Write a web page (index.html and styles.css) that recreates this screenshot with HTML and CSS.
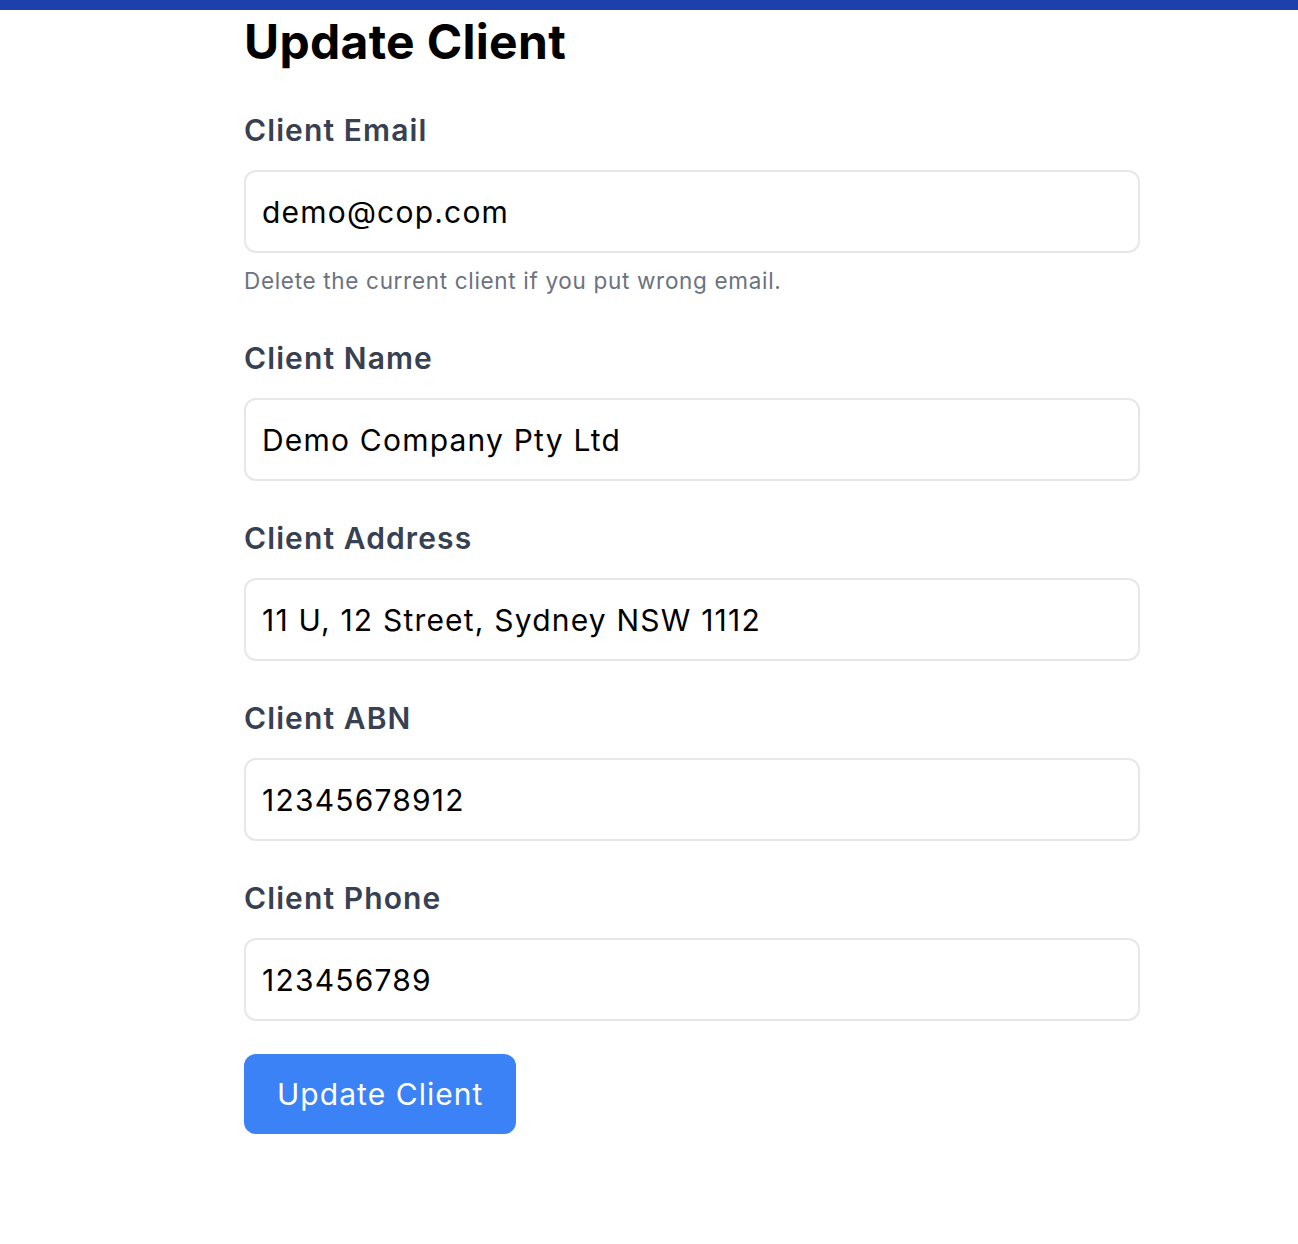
FILE: index.html
```html
<!DOCTYPE html>
<html lang="en">
<head>
  <meta charset="UTF-8" />
  <meta name="viewport" content="width=device-width, initial-scale=1" />
  <title>Update Client</title>
  <link rel="stylesheet" href="styles.css">
</head>
<body>
  <div class="topbar"></div>
  <main class="container">
    <h1>Update Client</h1>
    <form id="clientForm">
      <div class="field">
        <label for="email">Client Email</label>
        <input type="email" id="email" value="demo@cop.com" />
        <p class="hint">Delete the current client if you put wrong email.</p>
      </div>

      <div class="field">
        <label for="name">Client Name</label>
        <input type="text" id="name" value="Demo Company Pty Ltd" />
      </div>

      <div class="field">
        <label for="address">Client Address</label>
        <input type="text" id="address" value="11 U, 12 Street, Sydney NSW 1112" />
      </div>

      <div class="field">
        <label for="abn">Client ABN</label>
        <input type="text" id="abn" value="12345678912" />
      </div>

      <div class="field last">
        <label for="phone">Client Phone</label>
        <input type="tel" id="phone" value="123456789" />
      </div>

      <button type="submit">Update Client</button>
    </form>
  </main>
</body>
</html>
```

FILE: styles.css
```css
body {
  margin: 0;
  font-family: Inter, "Noto Sans", Arial, sans-serif;
  background: #fff;
  color: #000;
}
.topbar {
  height: 10px;
  background: #1e40af;
}
.container {
  width: 896px;
  margin-left: 244px;
}
h1 {
  margin: 0 0 35px;
  font-size: 48px;
  line-height: 64px;
  font-weight: 700;
  letter-spacing: 0.3px;
}
.field {
  margin-bottom: 36px;
}
.field:first-child {
  margin-bottom: 40px;
}
.field.last {
  margin-bottom: 33px;
}
label {
  display: block;
  font-size: 30px;
  line-height: 42px;
  font-weight: 600;
  letter-spacing: 1.1px;
  color: #374151;
  margin-bottom: 19px;
}
input[type="text"],
input[type="email"],
input[type="tel"] {
  display: block;
  width: 100%;
  height: 83px;
  box-sizing: border-box;
  padding: 0 16px;
  border: 2px solid #e5e7eb;
  border-radius: 12px;
  font-family: inherit;
  font-size: 30px;
  letter-spacing: 1.2px;
  color: #000;
  background: #fff;
  outline: none;
}
.hint {
  margin: 12px 0 0;
  font-size: 22.5px;
  line-height: 32px;
  letter-spacing: 0.68px;
  color: #6b7280;
}
button {
  display: block;
  height: 80px;
  padding: 0 33px;
  border: none;
  border-radius: 12px;
  background: #3b82f6;
  color: #fff;
  font-family: inherit;
  font-size: 30px;
  letter-spacing: 1.05px;
  cursor: pointer;
}
```
